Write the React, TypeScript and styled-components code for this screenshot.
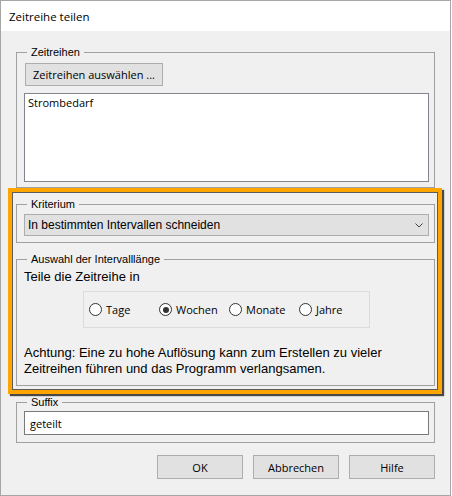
import React from "react";
import styled, { createGlobalStyle } from "styled-components";

const Global = createGlobalStyle`
  html, body { margin: 0; padding: 0; background: #ffffff; }
  #root { width: 452px; height: 496px; }
  * { box-sizing: border-box; }
`;

const ui = `"Open Sans", "Noto Sans", sans-serif`;
const classic = `"Liberation Sans", Arial, sans-serif`;

const Window = styled.div`
  width: 451px;
  height: 496px;
  border: 1px solid #a6a6a6;
  background: #f0f0f0;
  display: flex;
  flex-direction: column;
  font-family: ${ui};
  font-size: 11px;
  color: #000;
`;

const TitleBar = styled.div`
  height: 30px;
  flex: none;
  background: #ffffff;
  display: flex;
  align-items: center;
  padding-left: 8px;
  font-family: ${ui};
  font-size: 11.5px;
`;

const Body = styled.div`
  padding: 14px 15px 0 15px;
  display: flex;
  flex-direction: column;
`;

const GroupBox = styled.fieldset<{ $gap?: number }>`
  margin: ${(p) => p.$gap ?? 0}px 0 0 0;
  padding: 0;
  border: 1px solid #a0a0a0;
  min-width: 0;
`;

const Legend = styled.legend`
  font-family: ${classic};
  font-size: 11px;
  line-height: 14px;
  padding: 0 4px;
  margin-left: 10px;
`;

const Inner = styled.div<{ $top: number; $bottom: number }>`
  padding: ${(p) => p.$top}px 5px ${(p) => p.$bottom}px 7px;
  display: flex;
  flex-direction: column;
`;

const PushButton = styled.button<{ $w: number }>`
  width: ${(p) => p.$w}px;
  height: 24px;
  background: #e1e1e1;
  border: 1px solid #adadad;
  border-radius: 0;
  font-family: ${ui};
  font-size: 11px;
  color: #000;
  padding: 0;
  display: flex;
  align-items: center;
  justify-content: center;
`;

const SelectButton = styled(PushButton)`
  height: 23px;
  margin-left: 1px;
`;

const ListBox = styled.div`
  margin-top: 7px;
  height: 89px;
  background: #fff;
  border: 1px solid #82858e;
  padding: 1px 0 0 3px;
  font-family: ${ui};
  font-size: 11px;
  line-height: 16px;
`;

const Frame = styled.div`
  margin: 0 -7px 0 -8px;
  border: 4px solid #ffa500;
  box-shadow: inset 0 0 0 1px #5c5c5c, 2px 2px 1px rgba(0, 0, 0, 0.7);
  padding: 5px 3px 4px 4px;
  display: flex;
  flex-direction: column;
`;

const Combo = styled.div`
  height: 22px;
  background: #e1e1e1;
  border: 1px solid #adadad;
  display: flex;
  align-items: center;
  padding: 0 5px 0 3px;
  font-family: ${classic};
  font-size: 12px;
`;

const ComboText = styled.span`
  flex: 1;
`;

const PlainText = styled.div`
  font-family: ${classic};
  font-size: 13px;
  line-height: 16px;
`;

const Warning = styled(PlainText)`
  margin-top: 17px;
`;

const RadioBox = styled.div`
  margin: 6px auto 0 auto;
  width: 287px;
  height: 37px;
  border: 1px solid #dcdcdc;
  padding-left: 5px;
  display: grid;
  grid-template-columns: repeat(4, 70px);
  align-items: center;
`;

const RadioItem = styled.label`
  display: flex;
  align-items: center;
  gap: 4px;
  font-family: ${ui};
  font-size: 11px;
`;

const RadioCircle = styled.span<{ $checked?: boolean }>`
  width: 13px;
  height: 13px;
  border-radius: 50%;
  border: 1px solid #333;
  background: #fff;
  display: flex;
  align-items: center;
  justify-content: center;
  &::after {
    content: "";
    width: 6px;
    height: 6px;
    border-radius: 50%;
    background: ${(p) => (p.$checked ? "#333" : "transparent")};
  }
`;

const TextInput = styled.div`
  margin-top: 2px;
  height: 24px;
  background: #fff;
  border: 1px solid #7a7a7a;
  display: flex;
  align-items: center;
  padding-left: 5px;
  font-family: ${ui};
  font-size: 11px;
`;

const ButtonRow = styled.div`
  margin-top: 12px;
  display: flex;
  justify-content: flex-end;
  gap: 10px;
`;

const Chevron = () => (
  <svg width="8" height="5" viewBox="0 0 8 5">
    <polyline points="0.5,0.5 4,4 7.5,0.5" fill="none" stroke="#404040" strokeWidth="1" />
  </svg>
);

const options = [
  { label: "Tage", checked: false },
  { label: "Wochen", checked: true },
  { label: "Monate", checked: false },
  { label: "Jahre", checked: false },
];

export default function App() {
  return (
    <>
      <Global />
      <Window>
        <TitleBar>Zeitreihe teilen</TitleBar>
        <Body>
          <GroupBox>
            <Legend>Zeitreihen</Legend>
            <Inner $top={4} $bottom={5}>
              <SelectButton $w={138}>Zeitreihen auswählen ...</SelectButton>
              <ListBox>Strombedarf</ListBox>
            </Inner>
          </GroupBox>

          <Frame>
            <GroupBox>
              <Legend>Kriterium</Legend>
              <Inner $top={3} $bottom={6}>
                <Combo>
                  <ComboText>In bestimmten Intervallen schneiden</ComboText>
                  <Chevron />
                </Combo>
              </Inner>
            </GroupBox>
            <GroupBox $gap={9}>
              <Legend>Auswahl der Intervalllänge</Legend>
              <Inner $top={3} $bottom={8}>
                <PlainText>Teile die Zeitreihe in</PlainText>
                <RadioBox>
                  {options.map((o) => (
                    <RadioItem key={o.label}>
                      <RadioCircle $checked={o.checked} />
                      {o.label}
                    </RadioItem>
                  ))}
                </RadioBox>
                <Warning>
                  Achtung: Eine zu hohe Auflösung kann zum Erstellen zu vieler Zeitreihen führen und das Programm verlangsamen.
                </Warning>
              </Inner>
            </GroupBox>
          </Frame>

          <GroupBox $gap={1}>
            <Legend>Suffix</Legend>
            <Inner $top={0} $bottom={7}>
              <TextInput>geteilt</TextInput>
            </Inner>
          </GroupBox>

          <ButtonRow>
            <PushButton $w={86}>OK</PushButton>
            <PushButton $w={86}>Abbrechen</PushButton>
            <PushButton $w={86}>Hilfe</PushButton>
          </ButtonRow>
        </Body>
      </Window>
    </>
  );
}
